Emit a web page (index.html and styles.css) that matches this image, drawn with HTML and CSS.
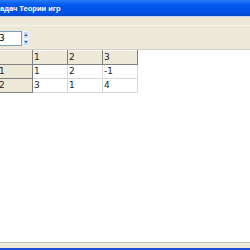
FILE: index.html
```html
<!DOCTYPE html>
<html lang="ru">
<head>
    <meta charset="UTF-8">
    <title>Задач Теории игр</title>
    <link rel="stylesheet" href="styles.css">
</head>
<body>
    <div class="window">
        <div class="titlebar">адач Теории игр</div>
        <div class="menubar"></div>
        <div class="toolbar">
            <div class="spin">
                <div class="spin-edit">3</div>
                <div class="spin-buttons">
                    <div class="spin-btn"><span class="arrow-up"></span></div>
                    <div class="spin-btn"><span class="arrow-down"></span></div>
                </div>
            </div>
        </div>
        <div class="grid-area">
            <table class="grid">
                <tr>
                    <td class="fixed"></td>
                    <td class="fixed">1</td>
                    <td class="fixed">2</td>
                    <td class="fixed">3</td>
                </tr>
                <tr>
                    <td class="fixed">1</td>
                    <td>1</td>
                    <td>2</td>
                    <td>-1</td>
                </tr>
                <tr>
                    <td class="fixed">2</td>
                    <td>3</td>
                    <td>1</td>
                    <td>4</td>
                </tr>
            </table>
        </div>
        <div class="statusbar"></div>
        <div class="frame-bottom"></div>
    </div>
</body>
</html>
```

FILE: styles.css
```css
body {
    margin: 0;
    padding: 0;
    overflow: hidden;
    font-family: 'DejaVu Sans', sans-serif;
}
.window {
    width: 250px;
    height: 250px;
    display: flex;
    flex-direction: column;
    background-color: #ece9d8;
}
.titlebar {
    height: 16px;
    background: linear-gradient(#2a7cf6, #0058ee 30%, #0052e4 80%, #0046c8);
    color: #fff;
    font-family: 'Liberation Sans', Arial, sans-serif;
    font-weight: bold;
    font-size: 7.5px;
    line-height: 17px;
    white-space: nowrap;
    border-bottom: 1px solid #c5d5f2;
}
.menubar {
    height: 8px;
    border-bottom: 1px solid #f6f4ec;
}
.toolbar {
    height: 23px;
    padding-top: 5px;
    box-sizing: border-box;
}
.spin {
    display: flex;
    gap: 1px;
}
.spin-edit {
    width: 24px;
    height: 15px;
    margin-left: -2px;
    box-sizing: border-box;
    border: 1px solid #7f9db9;
    background-color: #fff;
    font-size: 9px;
    line-height: 13px;
    color: #000;
}
.spin-buttons {
    display: flex;
    flex-direction: column;
    width: 6px;
    height: 15px;
}
.spin-btn {
    flex: 1;
    background-color: #c6d7fc;
    border: 1px solid #eef3fe;
    display: flex;
    align-items: center;
    justify-content: center;
}
.arrow-up, .arrow-down {
    width: 0;
    height: 0;
    border-left: 2px solid transparent;
    border-right: 2px solid transparent;
}
.arrow-up {
    border-bottom: 2px solid #4d6185;
}
.arrow-down {
    border-top: 2px solid #4d6185;
}
.grid-area {
    flex: 1;
    background-color: #fff;
    border-top: 1px solid #d4d0c8;
    overflow: hidden;
}
.grid {
    border-collapse: collapse;
    margin-left: -3px;
    font-size: 9px;
    font-family: 'DejaVu Sans', sans-serif;
}
.grid td {
    width: 33px;
    height: 13px;
    padding: 0 0 0 1px;
    border: 1px solid #d8d8d8;
    color: #222;
    line-height: 13px;
    vertical-align: middle;
}
.grid td.fixed {
    background-color: #ece9d8;
    border-right: 1px solid #808080;
    border-bottom: 1px solid #808080;
    border-left: 1px solid #fff;
    border-top: 1px solid #fff;
}
.statusbar {
    height: 5px;
    border-top: 1px solid #c2c2c2;
    background-color: #ece9d8;
}
.frame-bottom {
    height: 2px;
    background-color: #1f4fd9;
}
```
